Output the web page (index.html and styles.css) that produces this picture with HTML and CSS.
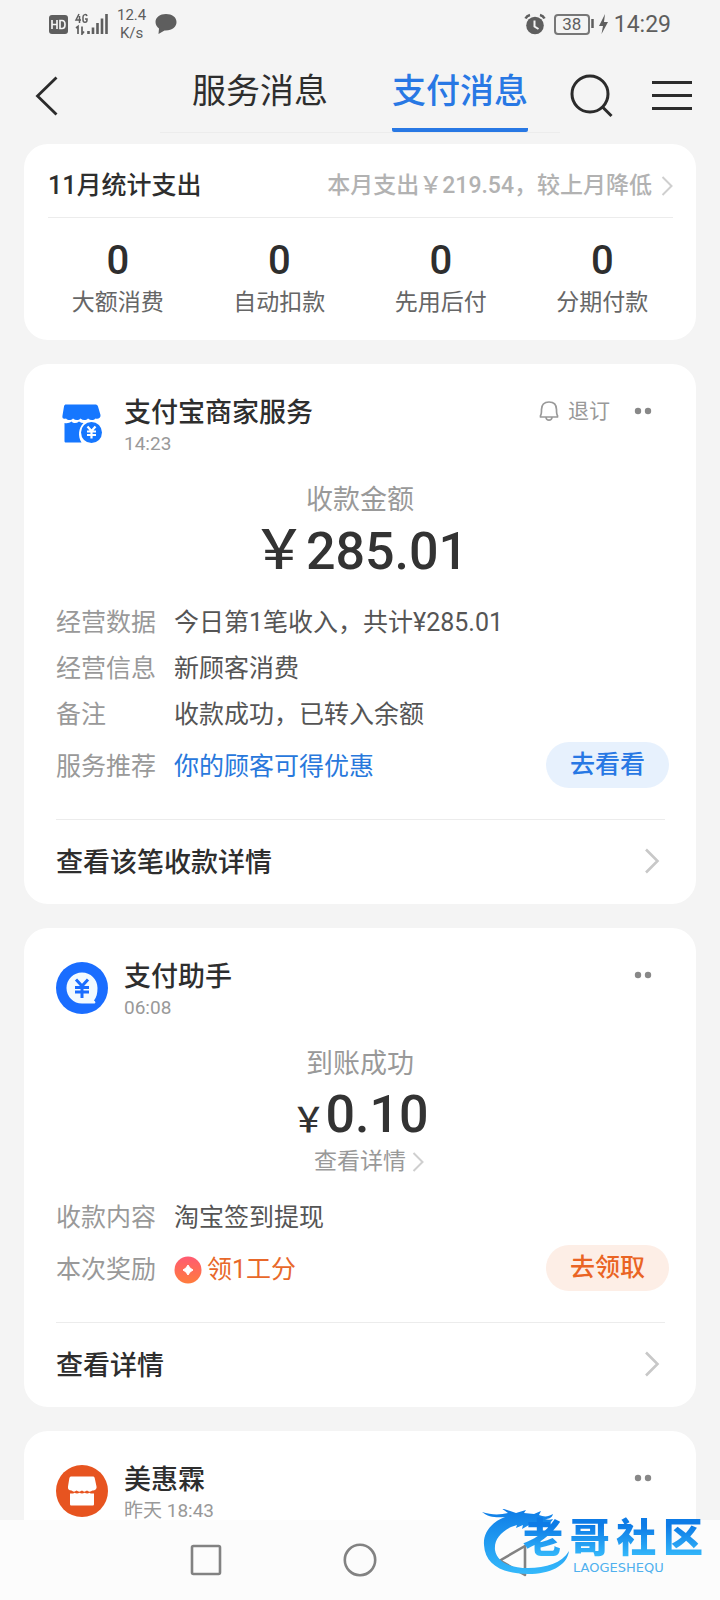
FILE: index.html
```html
<!DOCTYPE html>
<html lang="zh-CN">
<head>
<meta charset="utf-8">
<meta name="viewport" content="width=device-width, initial-scale=1">
<title>支付消息</title>
<link rel="stylesheet" href="styles.css">
</head>
<body>
<div class="app">
  <div class="status">
    <div class="status-group">
      <svg width="59" height="22" viewBox="0 0 59 22" aria-hidden="true">
        <rect x="0" y="2" width="19" height="19" rx="3" fill="#5e5e5e"/>
        <path d="M3 7v9M8 7v9M3 11.500h5M11 7.500v8h2c4 0 4-8 0-8z" fill="none" stroke="#f4f4f4" stroke-width="1.700"/>
        <path d="M30 1l-3 6h5M30.500 3v7M38 3c-.5-2-4-2-4 1v3c0 3 4 3 4 0V6h-2" fill="none" stroke="#5e5e5e" stroke-width="1.500"/>
        <path d="M27 15l2-1.500V21M33 13.500V21l2-2.500" fill="none" stroke="#5e5e5e" stroke-width="1.700"/>
        <path d="M39.500 18v3M44 14.500V21M48.500 10v11M53 5.500V21M57.500 1v20" stroke="#5e5e5e" stroke-width="2.600" fill="none"/>
      </svg>
      <div class="speed">12.4<br>K/s</div>
      <svg width="22" height="22" viewBox="0 0 22 22" aria-hidden="true"><path d="M11 1C5 1 .5 4.500.5 9c0 3 1.500 5 3.500 6.500L3.500 21l6-3.500C17 18 21.500 14 21.500 9S17 1 11 1z" fill="#5e5e5e"/></svg>
    </div>
    <div class="status-group status-right">
      <svg width="22" height="22" viewBox="0 0 22 22" aria-hidden="true">
        <circle cx="11" cy="12.500" r="8.800" fill="#5e5e5e"/>
        <path d="M1.500 5.500c1-2 2.500-3 4.500-3.500M20.500 5.500c-1-2-2.500-3-4.500-3.500" stroke="#5e5e5e" stroke-width="2.600" fill="none"/>
        <path d="M10.500 7.500v6l4 2.500" stroke="#f4f4f4" stroke-width="2" fill="none"/>
      </svg>
      <span class="battery">38</span>
      <svg class="bolt" width="18" height="22" viewBox="0 0 18 22" aria-hidden="true">
        <path d="M1.500 6v9" stroke="#5e5e5e" stroke-width="2.500"/>
        <path d="M14 1L8 13h4l-1.500 8L17 9h-4z" fill="#5e5e5e"/>
      </svg>
      <span class="clock">14:29</span>
    </div>
  </div>

  <header class="header">
    <button class="icon-btn back" aria-label="返回">
      <svg width="24" height="40" viewBox="0 0 24 40"><path d="M21.500 1.500L2.500 20l19 18.500" fill="none" stroke="#2b2b2b" stroke-width="2.800"/></svg>
    </button>
    <nav class="tabs">
      <button class="tab">服务消息</button>
      <button class="tab active">支付消息</button>
    </nav>
    <div class="tools">
      <button class="icon-btn" aria-label="搜索">
        <svg width="44" height="44" viewBox="0 0 44 44"><circle cx="20" cy="20" r="18" fill="none" stroke="#2b2b2b" stroke-width="3"/><path d="M32.500 33l9 9" stroke="#2b2b2b" stroke-width="3"/></svg>
      </button>
      <button class="icon-btn" aria-label="菜单">
        <svg width="40" height="44" viewBox="0 0 40 44"><path d="M0 8.500h40M0 21.500h40M0 34.500h40" stroke="#2b2b2b" stroke-width="3"/></svg>
      </button>
    </div>
  </header>

  <main class="feed">
    <section class="card">
      <div class="summary">
        <h2 class="summary-title">11月统计支出</h2>
        <a class="summary-link" href="#">本月支出￥219.54，较上月降低
          <svg width="12" height="20" viewBox="0 0 12 20"><path d="M1.500 1l9 9-9 9" fill="none" stroke="#cfcfcf" stroke-width="2"/></svg>
        </a>
      </div>
      <div class="stats">
        <div class="stat"><span class="stat-num">0</span><span class="stat-label">大额消费</span></div>
        <div class="stat"><span class="stat-num">0</span><span class="stat-label">自动扣款</span></div>
        <div class="stat"><span class="stat-num">0</span><span class="stat-label">先用后付</span></div>
        <div class="stat"><span class="stat-num">0</span><span class="stat-label">分期付款</span></div>
      </div>
    </section>

    <article class="card">
      <div class="card-head">
        <svg class="avatar" width="52" height="52" viewBox="0 0 52 52" aria-hidden="true">
          <path d="M10 6.500h29c1.500 0 2.500.5 3 2l2.500 8.500c.5 3-2.500 4.500-5 3.500-2 2-5 2-7.500 0-2 2-5 2-7.500 0-2 2-5 2-7.500 0-2 2-5 2-7 0-3 1-4-.5-3.500-3L8 8.500c.3-1.500 1-2 2-2z" fill="#1677ff"/>
          <path d="M8.500 25c3 .5 5 0 7-1.500 2 2 5 2 7.500 0 1.500 1 3 1.500 4.500 1.500-5 5-6 13-2 19.500H10c-1 0-1.500-.5-1.500-1.500z" fill="#1677ff"/>
          <circle cx="35.500" cy="34.500" r="10.500" fill="#1677ff"/>
          <path d="M31.500 28.500l4 4.500 4-4.500M35.500 33v7.500M31 33.500h9M31 37h9" stroke="#fff" stroke-width="2.200" fill="none"/>
        </svg>
        <div class="who"><h3 class="name">支付宝商家服务</h3><time class="time">14:23</time></div>
        <div class="head-tools">
          <button class="unsub">
            <svg width="20" height="22" viewBox="0 0 20 22" aria-hidden="true"><path d="M1.500 17V15.500c1-1 1-2 1-6C2.500 5 5 2 10 2s7.500 3 7.500 7.500c0 4 0 5 1 6V17zM7 17.500c.5 3.500 5.500 3.500 6 0" fill="none" stroke="#999" stroke-width="1.700" stroke-linejoin="round"/></svg>
            退订
          </button>
          <button class="more" aria-label="更多"><svg width="18" height="8" viewBox="0 0 18 8"><circle cx="4" cy="4" r="3.200" fill="#888"/><circle cx="14" cy="4" r="3.200" fill="#888"/></svg></button>
        </div>
      </div>
      <div class="hero">
        <div class="hero-label">收款金额</div>
        <div class="amount"><span class="yen">￥</span>285.01</div>
      </div>
      <dl class="rows">
        <div class="row"><dt>经营数据</dt><dd>今日第1笔收入，共计¥285.01</dd></div>
        <div class="row"><dt>经营信息</dt><dd>新顾客消费</dd></div>
        <div class="row"><dt>备注</dt><dd>收款成功，已转入余额</dd></div>
        <div class="row row-action"><dt>服务推荐</dt><dd><a class="blue" href="#">你的顾客可得优惠</a></dd><dd class="cta"><button class="pill pill-blue">去看看</button></dd></div>
      </dl>
      <a class="card-foot" href="#">查看该笔收款详情
        <svg width="16" height="26" viewBox="0 0 16 26"><path d="M2 1.500L13.500 13 2 24.500" fill="none" stroke="#c8c8c8" stroke-width="2.600"/></svg>
      </a>
    </article>

    <article class="card">
      <div class="card-head">
        <svg class="avatar" width="52" height="52" viewBox="0 0 52 52" aria-hidden="true">
          <circle cx="26" cy="26" r="26" fill="#1a6dff"/>
          <path d="M26 10.500a15.500 15.500 0 1 0 0 31h12.500c1.500-.5 1-2-.5-3 2.500-3 3.500-7 3.500-12.500C41.500 17 34.500 10.500 26 10.500z" fill="#f3faff"/>
          <path d="M20 17.500l6 6.500 6-6.500M26 24v12M19 25.500h14M19 30h14" stroke="#1a6dff" stroke-width="3" fill="none"/>
        </svg>
        <div class="who"><h3 class="name">支付助手</h3><time class="time">06:08</time></div>
        <div class="head-tools">
          <button class="more" aria-label="更多"><svg width="18" height="8" viewBox="0 0 18 8"><circle cx="4" cy="4" r="3.200" fill="#888"/><circle cx="14" cy="4" r="3.200" fill="#888"/></svg></button>
        </div>
      </div>
      <div class="hero">
        <div class="hero-label">到账成功</div>
        <div class="amount"><span class="yen-small">￥</span>0.10</div>
        <a class="hero-link" href="#">查看详情
          <svg width="12" height="20" viewBox="0 0 12 20"><path d="M1.500 1l9 9-9 9" fill="none" stroke="#cfcfcf" stroke-width="2"/></svg>
        </a>
      </div>
      <dl class="rows">
        <div class="row"><dt>收款内容</dt><dd>淘宝签到提现</dd></div>
        <div class="row row-action"><dt>本次奖励</dt><dd><a class="orange" href="#">
          <svg width="28" height="28" viewBox="0 0 28 28" aria-hidden="true"><defs><linearGradient id="coin" x1="0" y1="0" x2="0" y2="1"><stop offset="0" stop-color="#ff5a72"/><stop offset="1" stop-color="#ff7c3c"/></linearGradient></defs><circle cx="14" cy="14" r="13.500" fill="url(#coin)"/><path d="M14 9q1.500 3.500 5 5-3.500 1.500-5 5-1.500-3.500-5-5 3.500-1.500 5-5z" fill="#fff" stroke="#fff" stroke-linejoin="round"/></svg>领1工分</a></dd><dd class="cta"><button class="pill pill-orange">去领取</button></dd></div>
      </dl>
      <a class="card-foot" href="#">查看详情
        <svg width="16" height="26" viewBox="0 0 16 26"><path d="M2 1.500L13.500 13 2 24.500" fill="none" stroke="#c8c8c8" stroke-width="2.600"/></svg>
      </a>
    </article>

    <article class="card card-last">
      <div class="card-head">
        <svg class="avatar" width="52" height="52" viewBox="0 0 52 52" aria-hidden="true">
          <circle cx="26" cy="26" r="26" fill="#e75420"/>
          <path d="M15.500 11.500h21c1.500 0 2 .5 2.300 2l1.700 8c.5 2.500-1.500 4-4 4-2 1.500-4 1.500-5.500 0-2 1.500-3.500 1.500-5 0-2 1.500-3.500 1.500-5.500 0-1.500 1.500-3.500 1.500-5 0-2.500 0-4-1.500-3.500-4l1.300-8c.3-1.500 1-2 2.200-2z" fill="#fff"/>
          <path d="M14 28.500c2 .3 3.500 0 4.500-.8 1.500 1 3.500 1 5 0 1.500 1 3.500 1 5 0 2 1 3.500 1 5 0 1 .8 3 1.100 4.500.8V39c0 1-.5 1.500-1.500 1.500h-21c-1 0-1.500-.5-1.500-1.500z" fill="#fff"/>
        </svg>
        <div class="who"><h3 class="name">美惠霖</h3><time class="time">昨天 18:43</time></div>
        <div class="head-tools">
          <button class="more" aria-label="更多"><svg width="18" height="8" viewBox="0 0 18 8"><circle cx="4" cy="4" r="3.200" fill="#888"/><circle cx="14" cy="4" r="3.200" fill="#888"/></svg></button>
        </div>
      </div>
    </article>
  </main>

  <footer class="navbar">
    <button class="icon-btn" aria-label="最近任务"><svg width="34" height="34" viewBox="0 0 34 34"><rect x="3" y="3" width="28" height="28" rx="1.500" fill="none" stroke="#828282" stroke-width="2.600"/></svg></button>
    <button class="icon-btn" aria-label="主页"><svg width="34" height="34" viewBox="0 0 34 34"><circle cx="17" cy="17" r="15.200" fill="none" stroke="#828282" stroke-width="2.600"/></svg></button>
    <button class="icon-btn nav-back" aria-label="后退"><svg width="34" height="34" viewBox="0 0 34 34"><path d="M28 3v29L3 17.500z" fill="none" stroke="#828282" stroke-width="2.600" stroke-linejoin="round"/></svg></button>
    <div class="mark">
      <svg class="mark-dragon" width="100" height="74" viewBox="0 0 100 74" aria-hidden="true">
        <defs><linearGradient id="dragon" x1="0" y1="0" x2="0" y2="1"><stop offset="0" stop-color="#0d7be6"/><stop offset="1" stop-color="#35b9fb"/></linearGradient></defs>
        <path d="M0 3c9 3 18 3 26 1l-7-5 15 5 10-3-2 3 10 1 7-3-2 4c5 2 9 2 14-1-1 4-4 5-8 5 3 1 5 1 8 0-2 4-4 4-7 4l3 3c-8 1-14-2-20-1l-7 4 1-4-7 3 1-3-6 2c-11 6-17 13-16 23 2 13 17 18 33 18 18 0 34-5 41-17-2 15-19 23-41 23C21 65 3 56 2 36 1 23 10 13 23 8 14 9 6 8 0 3z" fill="url(#dragon)"/>
      </svg>
      <div class="mark-words">
        <div class="mark-name"><span>老</span><span>哥</span><span>社</span><span>区</span></div>
        <div class="mark-latin">LAOGESHEQU</div>
      </div>
    </div>
  </footer>
</div>
</body>
</html>
```
FILE: styles.css
```css
* { box-sizing: border-box; }
body {
  margin: 0;
  background: #f4f4f4;
  color: #2e2e2e;
  font-family: Roboto, "Noto Sans CJK SC", sans-serif;
}
button { padding: 0; border: 0; background: none; font: inherit; color: inherit; }
a { color: inherit; text-decoration: none; }
h2, h3, dl, dd { margin: 0; }
svg { display: block; flex: none; }

.app { display: flex; flex-direction: column; height: 100vh; overflow: hidden; }

.status { display: flex; justify-content: space-between; align-items: center; height: 48px; padding: 0 49px; flex: none; color: #5e5e5e; }
.status-group { display: flex; align-items: center; gap: 9px; }
.status-right { gap: 8px; }
.speed { font-size: 15px; line-height: 18px; text-align: center; }
.battery { width: 36px; height: 21px; border: 2px solid #777; border-radius: 4px; font-size: 17px; line-height: 17px; text-align: center; }
.bolt { margin-left: -7px; }
.clock { font-size: 23px; margin-left: -3px; }

.header { display: grid; grid-template-columns: 2fr 5fr 2fr; height: 96px; flex: none; align-items: start; }
.icon-btn { display: flex; align-items: center; justify-content: center; }
.back { justify-self: start; margin: 28px 0 0 35px; }
.tabs { display: grid; grid-template-columns: 1fr 1fr; justify-items: center; height: 85px; border-bottom: 1px solid #ececec; }
.tab { height: 84px; padding: 6px 0 0; border-bottom: 4px solid transparent; border-radius: 2px; font-size: 34px; line-height: 74px; }
.active { color: #2878e4; border-color: #2878e4; font-weight: 500; }
.tools { display: flex; justify-content: space-between; padding: 26px 28px 0 10px; }

.feed { flex: 1; min-height: 0; overflow: hidden; display: flex; flex-direction: column; gap: 24px; padding: 0 24px; }
.card { flex: none; background: #fff; border-radius: 24px; }
.card-last { flex: 1 0 auto; border-radius: 24px 24px 0 0; }

.summary { display: flex; justify-content: space-between; align-items: center; margin: 0 23px 0 24px; padding: 25px 0 14px; border-bottom: 1px solid #ececec; line-height: 34px; }
.summary-title { font-size: 25px; font-weight: 500; }
.summary-link { display: flex; align-items: center; gap: 9px; font-size: 23px; color: #b2b2b2; font-weight: 500; }
.stats { display: grid; grid-template-columns: repeat(4, 1fr); padding: 21px 13px; }
.stat { display: flex; flex-direction: column; align-items: center; gap: 4px; }
.stat-num { font-size: 40px; line-height: 44px; font-weight: 500; }
.stat-label { font-size: 23px; line-height: 32px; color: #666; }

.card-head { display: flex; padding: 31px 44px 0 32px; }
.avatar { margin: 3px 16px 0 0; }
.who { flex: 1; }
.name { font-size: 27px; line-height: 36px; font-weight: 500; }
.time { display: block; font-size: 19px; line-height: 25px; color: #999; }
.head-tools { display: flex; align-items: center; gap: 24px; height: 32px; }
.unsub { display: flex; align-items: center; gap: 9px; font-size: 21px; line-height: 28px; color: #999; }

.hero { display: flex; flex-direction: column; align-items: center; padding: 26px 0 16px; }
.hero-label { font-size: 27px; line-height: 36px; color: #999; }
.amount { display: flex; align-items: baseline; height: 64px; font-size: 52px; line-height: 66px; font-weight: 500; color: #333; }
.yen { font-size: 54px; }
.yen-small { font-size: 34px; }
.hero-link { display: flex; align-items: center; gap: 6px; padding-left: 18px; font-size: 23px; line-height: 31px; color: #999; }

.rows { padding: 0 27px 31px 32px; font-size: 25px; line-height: 36px; }
.row { display: grid; grid-template-columns: 118px 1fr auto; align-items: center; min-height: 46px; color: #555; }
.row dt, .row dd { padding-top: 3px; }
.row dt { color: #999; }
.row .cta { padding-top: 0; }
.row-action { margin-top: 6px; }
.blue { color: #2878dc; }
.orange { display: flex; align-items: center; gap: 5px; color: #e8682a; }
.pill { display: block; height: 46px; padding: 0 24px; border-radius: 23px; font-weight: 500; }
.pill-blue { background: #e7f1fd; color: #2878e4; }
.pill-orange { background: #fdeee6; color: #ea6424; }
.card-foot { display: flex; justify-content: space-between; align-items: center; height: 85px; margin: 0 31px 0 32px; padding: 0 5px 3px 0; border-top: 1px solid #ececec; font-size: 27px; font-weight: 500; }

.navbar { position: relative; display: flex; justify-content: center; gap: 120px; flex: none; height: 80px; background: #fcfcfc; }
.mark { position: absolute; right: 17px; bottom: 25px; width: 221px; height: 74px; }
.mark-dragon { position: absolute; left: 0; top: 8px; }
.mark-words { position: relative; width: 180px; margin: 16px 0 0 auto; }
.mark-name { display: flex; justify-content: space-between; font-size: 40px; line-height: 44px; font-weight: 900; color: transparent; background: linear-gradient(#0d7be6 20%, #35b9fb 90%); background-clip: text; -webkit-background-clip: text; }
.mark-latin { padding-left: 50px; font: 13px/14px "DejaVu Sans", sans-serif; color: #4fb0ee; }
```
